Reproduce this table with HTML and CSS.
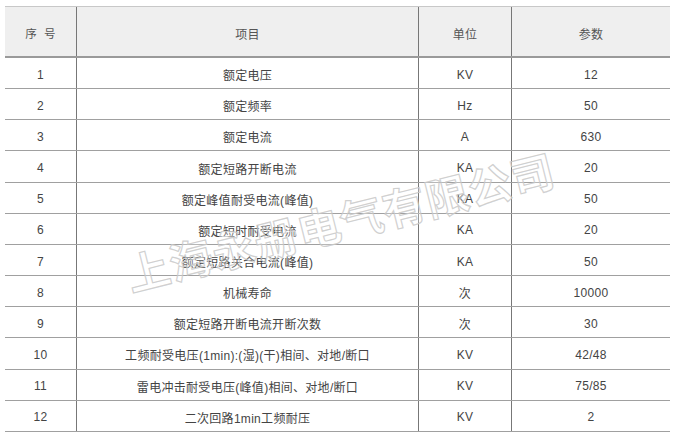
FILE: index.html
```html
<!DOCTYPE html>
<html lang="zh">
<head>
<meta charset="utf-8">
<link rel="stylesheet" href="styles.css">
</head>
<body>
<div class="page">
  <div class="spec">
    <div class="row head">
      <div class="cell">序&nbsp;&nbsp;号</div>
      <div class="cell">项目</div>
      <div class="cell">单位</div>
      <div class="cell">参数</div>
    </div>
    <div class="row"><div class="cell">1</div><div class="cell">额定电压</div><div class="cell">KV</div><div class="cell">12</div></div>
    <div class="row"><div class="cell">2</div><div class="cell">额定频率</div><div class="cell">Hz</div><div class="cell">50</div></div>
    <div class="row"><div class="cell">3</div><div class="cell">额定电流</div><div class="cell">A</div><div class="cell">630</div></div>
    <div class="row"><div class="cell">4</div><div class="cell">额定短路开断电流</div><div class="cell">KA</div><div class="cell">20</div></div>
    <div class="row"><div class="cell">5</div><div class="cell">额定峰值耐受电流(峰值)</div><div class="cell">KA</div><div class="cell">50</div></div>
    <div class="row"><div class="cell">6</div><div class="cell">额定短时耐受电流</div><div class="cell">KA</div><div class="cell">20</div></div>
    <div class="row"><div class="cell">7</div><div class="cell">额定短路关合电流(峰值)</div><div class="cell">KA</div><div class="cell">50</div></div>
    <div class="row"><div class="cell">8</div><div class="cell">机械寿命</div><div class="cell">次</div><div class="cell">10000</div></div>
    <div class="row"><div class="cell">9</div><div class="cell">额定短路开断电流开断次数</div><div class="cell">次</div><div class="cell">30</div></div>
    <div class="row"><div class="cell">10</div><div class="cell">工频耐受电压(1min):(湿)(干)相间、对地/断口</div><div class="cell">KV</div><div class="cell">42/48</div></div>
    <div class="row"><div class="cell">11</div><div class="cell">雷电冲击耐受电压(峰值)相间、对地/断口</div><div class="cell">KV</div><div class="cell">75/85</div></div>
    <div class="row"><div class="cell">12</div><div class="cell">二次回路1min工频耐压</div><div class="cell">KV</div><div class="cell">2</div></div>
  </div>
  <div class="watermark">上海永册电气有限公司</div>
</div>
</body>
</html>
```
FILE: styles.css
```css
html, body {
  margin: 0;
  padding: 0;
  background: #ffffff;
}
.page {
  position: relative;
  width: 680px;
  height: 446px;
  overflow: hidden;
  padding: 6px 0 0 5px;
  box-sizing: border-box;
  font-family: "Liberation Sans", "Noto Sans CJK SC", sans-serif;
  font-size: 12px;
  color: #444;
  letter-spacing: 0.3px;
}
.spec {
  width: 665px;
}
.row {
  display: grid;
  grid-template-columns: 71px 342px 93px 159px;
  height: 31.17px;
  box-sizing: border-box;
  border-bottom: 1px solid #a0a0a0;
}
.row.head {
  height: 52px;
  background: #efefef;
  border-top: 1px solid #c8c8c8;
  border-bottom: 2px solid #9a9a9a;
  color: #555;
}
.cell {
  display: flex;
  align-items: center;
  justify-content: center;
  padding-top: 3px;
  white-space: nowrap;
}
.cell + .cell {
  border-left: 1px solid #777;
}
.head .cell:first-child {
  font-size: 11.5px;
}
.watermark {
  position: absolute;
  left: 340px;
  top: 220px;
  transform: translate(-50%, -50%) rotate(-14deg);
  font-family: "Noto Sans CJK SC", sans-serif;
  font-size: 43px;
  font-weight: 700;
  letter-spacing: 1px;
  color: rgba(255, 255, 255, 0.25);
  -webkit-text-stroke: 1.2px rgba(200, 200, 200, 0.85);
  white-space: nowrap;
  pointer-events: none;
}
```
